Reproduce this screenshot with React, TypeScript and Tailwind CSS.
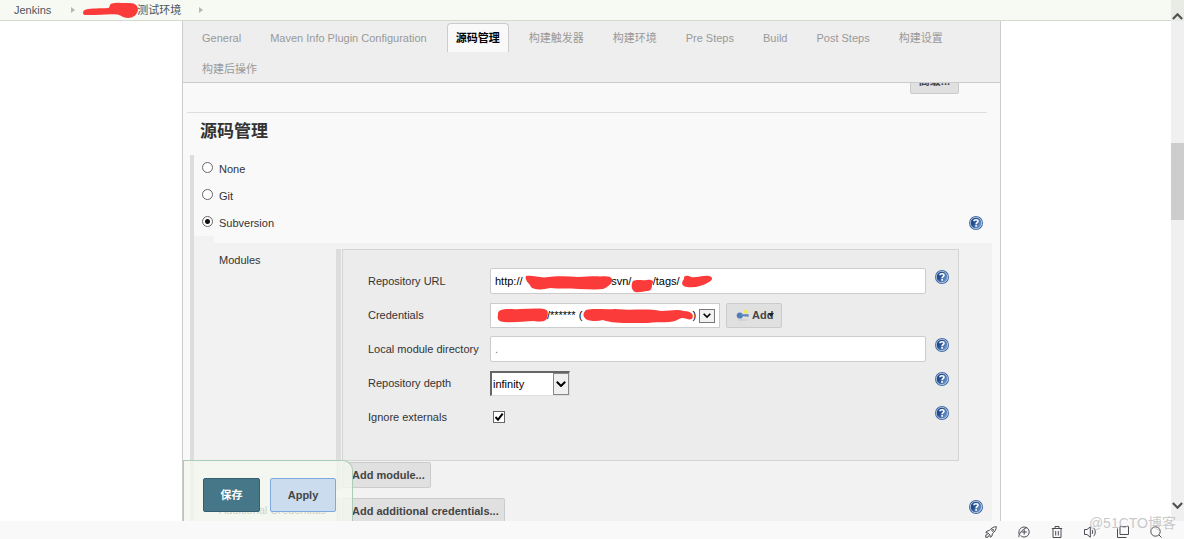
import React, { useState } from "react";

const tabs = [
  "General",
  "Maven Info Plugin Configuration",
  "源码管理",
  "构建触发器",
  "构建环境",
  "Pre Steps",
  "Build",
  "Post Steps",
  "构建设置",
  "构建后操作",
];

const scmTypes = ["None", "Git", "Subversion"];

const nbsp = (n: number) => "\u00a0".repeat(n);

const HelpIcon = () => (
  <button type="button" aria-label="Help" className="block size-[14px] shrink-0">
    <svg viewBox="0 0 14 14" className="size-[14px]">
      <defs>
        <linearGradient id="helpFill" x1="0" y1="0" x2="1" y2="0.6">
          <stop offset="0.4" stopColor="#1f4a8c" />
          <stop offset="1" stopColor="#6f98cc" />
        </linearGradient>
      </defs>
      <circle cx="7" cy="7" r="7" fill="#3f68a3" />
      <circle cx="7" cy="7" r="5.7" fill="url(#helpFill)" stroke="#dbe5f2" strokeWidth="0.7" />
      <path
        d="M5 5.3C5 4.2 5.900 3.700 7 3.700s2 .6 2 1.600c0 1.400-1.900 1.400-1.900 3"
        fill="none"
        stroke="#fff"
        strokeWidth="1.6"
      />
      <rect x="6.2" y="9.1" width="1.8" height="1.6" fill="#fff" />
    </svg>
  </button>
);

const Chevron = ({ className = "" }: { className?: string }) => (
  <svg viewBox="0 0 10 6" className={className} fill="none" stroke="currentColor" strokeWidth="2">
    <path d="M0.8 0.8 5 5 9.2 0.8" />
  </svg>
);

const Crumb = () => (
  <svg viewBox="0 0 4 6" className="h-[6px] w-1" fill="#b3b8b0">
    <path d="M0 0 4 3 0 6z" />
  </svg>
);

const KeyIcon = () => (
  <svg viewBox="0 0 14 14" className="size-[14px]">
    <ellipse cx="6.5" cy="12" rx="5" ry="0.8" fill="#cfcfcf" />
    <circle cx="10" cy="3.8" r="2" fill="#f2e94e" />
    <path d="M4.5 6h8v2.800h-1.500v-.6h-1v.6h-1v-.6H5z" fill="#5581b8" />
    <circle cx="3.8" cy="7.5" r="3.1" fill="#4f7db8" />
    <path d="M5 6.700h7" stroke="#8fb0d9" strokeWidth="0.7" />
  </svg>
);

const greyButton =
  "h-[26px] rounded-[2px] border border-[#cbcbcb] bg-[#e0e0e0] text-[11px] font-bold text-[#444]";

const textInput =
  "h-[26px] w-full rounded-[2px] border border-[#ccc] bg-white px-1 text-[11px] outline-none";

type RowProps = {
  label: string;
  id: string;
  help?: boolean;
  children: React.ReactNode;
};

const Row = ({ label, id, help = true, children }: RowProps) => (
  <div className="flex h-[34px] items-center">
    <label htmlFor={id} className="w-[122px] shrink-0 whitespace-nowrap">
      {label}
    </label>
    <div className="flex flex-1 items-center">{children}</div>
    <div className="mb-2 ml-[9px] w-[14px]">{help && <HelpIcon />}</div>
  </div>
);

const StatusIcons = () => (
  <div className="flex items-center gap-[21px] text-[#4c4c55]">
    <button type="button" aria-label="Boost">
      <svg viewBox="0 0 12 12" className="size-3" fill="none" stroke="currentColor">
        <path d="M11.3.7C8.5.7 6.3 2 4.3 4.6L2 5 .8 6.8l2.2.2L5 9l.2 2.2L7 10l.4-2.3C10 5.7 11.3 3.5 11.3.7z" />
        <circle cx="7.7" cy="4.3" r="1" />
        <path d="M2.7 8.3.8 9l-.1 2.3L3 11.2l.8-1.8" />
      </svg>
    </button>
    <button type="button" aria-label="Browser mode">
      <svg viewBox="0 0 12 12" className="size-3" fill="none" stroke="currentColor">
        <path d="M1.2 8.5C0 4.5 2.5 1 6.2 1c2.8 0 5 2.200 5 5s-2.200 5-5 5c-1.500 0-2.700-.6-3.600-1.500" />
        <path d="M8.8 6H3.5M6.2 3.5v5M1 11.2C.2 9 3.5 3.5 9 1.5" />
      </svg>
    </button>
    <button type="button" aria-label="Clean">
      <svg viewBox="0 0 12 12" className="size-3" fill="none" stroke="currentColor">
        <path d="M.8 2.5h10.400M4 2.500v-2h4v2M2 2.500v9h8v-9M4.700 5v4.500M7.300 5v4.500" />
      </svg>
    </button>
    <button type="button" aria-label="Sound">
      <svg viewBox="0 0 12 12" className="size-3" fill="none" stroke="currentColor">
        <path d="M.5 3.5H3L6.3.8v10.400L3 8.500H.5zM8 4c.9 1.200.9 2.800 0 4M9.600 1.800c2.200 2.300 2.200 6.100 0 8.400" />
      </svg>
    </button>
    <button type="button" aria-label="Windows">
      <svg viewBox="0 0 12 12" className="size-3" fill="none" stroke="currentColor">
        <path d="M3 .5h8.500V8.500H3zM.5 2.500v9h9" />
      </svg>
    </button>
    <button type="button" aria-label="Search">
      <svg viewBox="0 0 12 12" className="size-3" fill="none" stroke="currentColor">
        <circle cx="5.5" cy="5.5" r="4.7" />
        <path d="m8.8 8.8 2.7 2.7" />
      </svg>
    </button>
  </div>
);

const App = () => {
  const [active, setActive] = useState("源码管理");
  const [scm, setScm] = useState("Subversion");

  return (
    <div className="relative flex h-screen flex-col overflow-hidden bg-white font-['Liberation_Sans','Noto_Sans_CJK_SC',sans-serif] text-[11px] leading-4 text-[#333]">
      <div className="flex min-h-0 flex-1">
        <div className="flex min-w-0 flex-1 flex-col">
          <nav className="flex h-[21px] shrink-0 items-center border-b border-[#d3dacf] bg-[#f6faf2] pb-px pl-[14px] text-[#4d545d]">
            <a href="#jenkins">Jenkins</a>
            <span className="ml-5">
              <Crumb />
            </span>
            <a href="#job" className="relative ml-2 pl-[54px]">
              测试环境
              <svg className="pointer-events-none absolute top-0 left-0 h-4 w-14" fill="#fb3a3a">
                <path d="M3 7.500C8 6 18 6.500 25 6C28 5.500 25 3 29 1.500C34 0 40 1.500 46 1C53 1 55 4 55 8C54 13 50 16 45 16C40 16 38 13 34 12.500C27 11.500 11 13.500 3 13C-1 13-1 8.500 3 7.500z" />
              </svg>
            </a>
            <span className="ml-[18px]">
              <Crumb />
            </span>
          </nav>

          <main className="mr-[170px] ml-[182px] flex min-h-0 flex-1 flex-col border-x border-[#ccc] bg-[#f9f9f9]">
            <div className="flex h-[62px] shrink-0 flex-wrap content-start gap-x-[11px] gap-y-[2px] border-b border-[#ccc] bg-[#eee] pt-[2px] pr-[30px] pl-[10px]">
              {tabs.map((tab) => (
                <button
                  key={tab}
                  type="button"
                  onClick={() => setActive(tab)}
                  className={`h-[29px] rounded-t-[4px] border border-b-0 px-2 whitespace-nowrap ${
                    active === tab
                      ? "border-[#ccc] bg-[#f9f9f9] font-bold text-black"
                      : "border-transparent text-[#999]"
                  }`}
                >
                  {tab}
                </button>
              ))}
            </div>

            <form className="relative min-h-0 flex-1 overflow-hidden">
              <div className="-mt-[15px] flex justify-end pr-[41px]">
                <button type="button" className={`${greyButton} px-2`}>
                  高级...
                </button>
              </div>
              <hr className="mt-[18px] mr-[13px] ml-1 border-t border-[#ddd]" />
              <h2 className="mt-[7px] ml-[17px] text-[17px] leading-6 font-bold">源码管理</h2>

              <section className="mt-[11px] mr-2 ml-[7px] border-l-4 border-[#ddd]">
                {scmTypes.map((type) => (
                  <div key={type} className="flex h-[27px] items-center justify-between pr-[9px] pl-2">
                    <label className="flex items-center gap-[6px]">
                      <input
                        type="radio"
                        name="scm"
                        checked={scm === type}
                        onChange={() => setScm(type)}
                        className="mb-[2px] size-[11px] appearance-none rounded-full border border-[#666] bg-white checked:bg-[radial-gradient(circle,#111_0_2px,#fff_3px)]"
                      />
                      {type}
                    </label>
                    {type === "Subversion" && <HelpIcon />}
                  </div>
                ))}

                <div className="h-[7px] w-5 bg-[#f2f2f2]" />
                <div className="bg-[#f2f2f2] pt-[6px]">
                  <div className="flex">
                    <div className="w-[142px] shrink-0 pt-[3px] pl-[25px]">Modules</div>
                    <div className="mr-px w-[5px] shrink-0 bg-[#ddd]" />
                    <div className="mr-[33px] flex-1">
                      <div className="border border-[#d4d4d4] bg-[#ececec] pt-[14px] pr-[9px] pb-[26px] pl-[25px]">
                        <Row label="Repository URL" id="url">
                          <div className="relative flex-1">
                            <input
                              id="url"
                              className={`${textInput} text-black`}
                              defaultValue={`http://${nbsp(29)}svn/${nbsp(7)}/tags/`}
                            />
                            <svg className="pointer-events-none absolute inset-0 size-full" fill="#fb3a3a">
                              <path d="M36 8C42 7 47 9 54 9.500C65 8 77 8 88 9C96 9 103 8 110 8.500C116 8 121 8 122 11C123 15 118 19 113 21C105 22 97 21 89 21C78 20 69 21 60 20C53 22 43 22 41 19C40 16 34 12 36 8z" />
                              <path d="M143 13C148 11 152 13 157 12C162 11 165 14 162 16C162 19 162 22 158 23C153 23 150 25 145 24C141 22 141 16 143 13z" />
                              <path d="M194 11C193 7 198 7 201 9C207 10 213 7 219 8C223 9 223 12 219 14C213 18 205 20 197 19C190 18 192 13 194 11z" />
                            </svg>
                          </div>
                        </Row>
                        <Row label="Credentials" id="credentials" help={false}>
                          <div className="relative w-[230px]">
                            <select
                              id="credentials"
                              className="block h-[25px] w-full appearance-none border border-[#ccc] bg-white pl-[7px] text-[11px] text-black"
                            >
                              <option>{`${nbsp(16)}/****** (${nbsp(36)})`}</option>
                            </select>
                            <span className="pointer-events-none absolute top-[6px] right-[5px] flex h-[14px] w-4 items-center justify-center border border-[#777] bg-[#f2f2f2] text-black">
                              <Chevron className="h-[5px] w-2" />
                            </span>
                            <svg className="pointer-events-none absolute inset-0 size-full" fill="#fb3a3a">
                              <path d="M11 7C18 5 23 7 30 6C38 6 47 5 54 6C59 7 58 11 57 15C56 19 50 19 44 18C34 18 25 20 14 19C8 19 7 15 8 12C8 10 8 8 11 7z" />
                              <path d="M96 7C104 5 114 7 125 6C142 8 156 5 171 8C180 8 187 6 194 8C200 8 205 11 202 16C198 18 194 13 189 16C182 21 170 18 158 20C141 20 124 21 113 17C106 19 96 18 95 15C92 12 94 9 96 7z" />
                            </svg>
                          </div>
                          <button
                            type="button"
                            className="ml-[6px] flex h-[25px] w-[56px] items-center gap-[2px] rounded-[2px] border border-[#cbcbcb] bg-[#e0e0e0] pl-[9px] font-bold text-[#444]"
                          >
                            <KeyIcon />
                            <span className="relative">
                              Add
                              <svg viewBox="0 0 6 4" className="absolute top-[6px] -right-px h-1 w-[6px]">
                                <path d="M0 0h6L3 4z" fill="#222" />
                              </svg>
                            </span>
                          </button>
                        </Row>
                        <Row label="Local module directory" id="local">
                          <input id="local" className={`${textInput} text-[#777]`} defaultValue="." />
                        </Row>
                        <Row label="Repository depth" id="depth">
                          <div className="relative w-20">
                            <select
                              id="depth"
                              className="block h-[25px] w-full appearance-none border border-t-2 border-l-2 border-[#ddd] border-t-[#666] border-l-[#666] bg-white pl-px text-[11px] text-black"
                            >
                              <option>infinity</option>
                              <option>empty</option>
                              <option>files</option>
                              <option>immediates</option>
                            </select>
                            <span className="pointer-events-none absolute top-[2px] right-px flex h-[22px] w-4 items-center justify-center border border-[#888] bg-[#f0f0f0] text-black">
                              <Chevron className="h-[6px] w-[10px]" />
                            </span>
                          </div>
                        </Row>
                        <Row label="Ignore externals" id="externals">
                          <span className="relative ml-[3px] block size-3">
                            <input
                              id="externals"
                              type="checkbox"
                              defaultChecked
                              className="peer block size-3 appearance-none border border-[#666] bg-white"
                            />
                            <svg
                              viewBox="0 0 12 12"
                              className="pointer-events-none absolute inset-0 hidden size-3 peer-checked:block"
                              fill="none"
                              stroke="#000"
                              strokeWidth="1.9"
                            >
                              <path d="m2.500 6 2.500 2.700 4.700-6" />
                            </svg>
                          </span>
                        </Row>
                      </div>
                      <button type="button" className={`${greyButton} mt-px mb-[2px] block pr-[5px] pl-[9px]`}>
                        Add module...
                      </button>
                    </div>
                  </div>

                  <div className="mt-2 flex">
                    <div className="w-[142px] shrink-0 pt-1 pl-[25px]">Additional Credentials</div>
                    <div className="mr-px w-[5px] shrink-0 bg-[#ddd]" />
                    <div className="flex flex-1 items-start justify-between pr-[9px]">
                      <button type="button" className={`${greyButton} pr-[5px] pl-[9px]`}>
                        Add additional credentials...
                      </button>
                      <div className="pt-[2px]">
                        <HelpIcon />
                      </div>
                    </div>
                  </div>
                </div>
              </section>

              {/* sticky save bar */}
              <div className="absolute bottom-0 left-0 flex gap-[10px] rounded-tr-[10px] border border-b-0 border-[#a9cdb9] bg-[#f4f8ee]/80 pt-[17px] pr-4 pb-[9px] pl-[19px]">
                <button
                  type="button"
                  className="h-[34px] w-[57px] rounded-[2px] border border-[#335f70] bg-[#457788] font-bold text-white"
                >
                  保存
                </button>
                <button
                  type="button"
                  className="h-[34px] w-[66px] rounded-[2px] border border-[#7fa9dc] bg-[#cbdcee] font-bold text-[#444]"
                >
                  Apply
                </button>
              </div>
            </form>
          </main>
        </div>

        <div className="flex w-[13px] shrink-0 flex-col items-center bg-[#f0f0f0] text-[#505050]">
          <div className="flex h-[21px] w-full items-end justify-center bg-[#e9ece6] pb-px">
            <Chevron className="h-[7px] w-[11px] rotate-180" />
          </div>
          <div className="mt-[122px] h-[77px] w-full bg-[#cdcdcd]" />
          <Chevron className="mt-auto mb-3 h-[7px] w-[11px]" />
        </div>
      </div>

      <footer className="flex h-[18px] shrink-0 items-center justify-end bg-[#f9f9f9] pt-[4px] pr-[22px]">
        <StatusIcons />
      </footer>

      <div className="pointer-events-none absolute right-2 bottom-[6px] text-[14px] leading-5 text-[#bbb]/80">
        @51CTO博客
      </div>
    </div>
  );
};

export default App;
